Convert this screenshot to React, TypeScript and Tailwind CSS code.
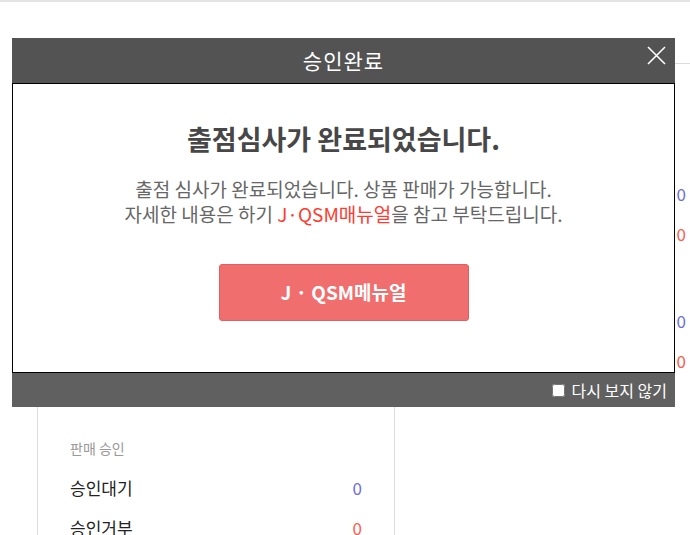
import React, { useState } from "react";

const font = { fontFamily: '"Malgun Gothic", "Noto Sans CJK KR", "Noto Sans", sans-serif' };

type Row = { label: string; value: number; tone: "blue" | "red" };

const leftSections: { title: string; rows: Row[] }[] = [
  {
    title: "출점 심사",
    rows: [
      { label: "심사대기", value: 0, tone: "blue" },
      { label: "심사거부", value: 0, tone: "red" },
    ],
  },
  {
    title: "상품 등록",
    rows: [
      { label: "등록대기", value: 0, tone: "blue" },
      { label: "등록거부", value: 0, tone: "red" },
    ],
  },
  {
    title: "판매 승인",
    rows: [
      { label: "승인대기", value: 0, tone: "blue" },
      { label: "승인거부", value: 0, tone: "red" },
    ],
  },
];

const Section = ({ title, rows }: { title: string; rows: Row[] }) => (
  <div>
    <p className="h-10 flex items-center text-[14px] text-[#999]">{title}</p>
    {rows.map((r) => (
      <div key={r.label} className="h-10 flex items-center justify-between text-[17px] text-[#222]">
        <span>{r.label}</span>
        <span className={r.tone === "blue" ? "text-[#6f6fdc]" : "text-[#ff5b4f]"}>{r.value}</span>
      </div>
    ))}
  </div>
);

const ApproveModal = () => {
  const [hide, setHide] = useState(false);

  return (
    <div className="absolute left-[12px] top-[36px] w-[663px] flex flex-col">
      <div className="relative h-[45px] bg-[#535353] flex items-center justify-center">
        <h2 className="text-white text-[21px] tracking-[1px]">승인완료</h2>
        <button className="absolute right-[8px] top-[7px] w-[21px] h-[21px]">
          <svg viewBox="0 0 21 21" className="w-[21px] h-[21px]">
            <path d="M2 2L19 19M19 2L2 19" stroke="#fff" strokeWidth="1.6" fill="none" />
          </svg>
        </button>
      </div>

      <div className="h-[290px] bg-white border border-black flex flex-col items-center">
        <p className="mt-[38px] text-[27px] font-bold text-[#474747] leading-[34px]">출점심사가 완료되었습니다.</p>
        <div className="mt-[20px] text-[19px] text-[#666] leading-[25px] text-center">
          <p>출점 심사가 완료되었습니다. 상품 판매가 가능합니다.</p>
          <p>
            자세한 내용은 하기 <span className="text-[#ff3b30]">J·QSM매뉴얼</span>을 참고 부탁드립니다.
          </p>
        </div>
        <button className="mt-[38px] w-[250px] h-[57px] rounded-[3px] bg-[#f06e6e] border border-[#e35f5f] text-white text-[19px] font-bold">
          J · QSM메뉴얼
        </button>
      </div>

      <div className="h-[34px] bg-[#606060] flex items-center justify-end pr-[8px]">
        <label className="flex items-center gap-[7px] text-white text-[16px] cursor-pointer">
          <input
            type="checkbox"
            checked={hide}
            onChange={(e) => setHide(e.target.checked)}
            className="w-[13px] h-[13px]"
          />
          다시 보지 않기
        </label>
      </div>
    </div>
  );
};

export default function App() {
  return (
    <div style={font} className="relative w-[690px] h-[535px] overflow-hidden bg-white border-t-2 border-[#e4e4e4]">
      <div className="flex pt-[61px]">
        <div className="ml-[37px] w-[358px] shrink-0 h-[600px] border border-[#dcdcdc] border-t-0 px-[32px] pt-[70px]">
          <div className="flex flex-col gap-[7px]">
            <Section {...leftSections[0]} />
            <Section {...leftSections[1]} />
          </div>
          <div className="mt-[48px]">
            <Section {...leftSections[2]} />
          </div>
        </div>
        <div className="ml-[25px] w-[298px] shrink-0 h-[600px] border-t border-[#dcdcdc] px-[32px] pt-[70px]">
          <div className="flex flex-col gap-[7px]">
            <Section title="배송 현황" rows={[{ label: "배송대기", value: 0, tone: "blue" }, { label: "배송지연", value: 0, tone: "red" }]} />
            <Section title="클레임" rows={[{ label: "취소요청", value: 0, tone: "blue" }, { label: "반품요청", value: 0, tone: "red" }]} />
          </div>
        </div>
      </div>
      <ApproveModal />
    </div>
  );
}
